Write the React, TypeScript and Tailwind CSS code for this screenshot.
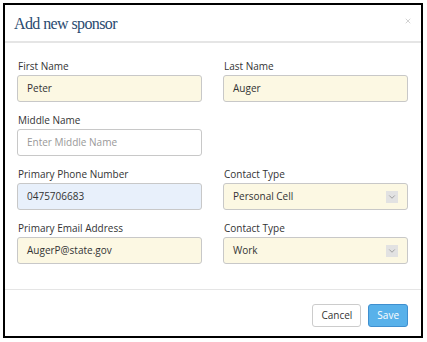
import { ChevronDown, X } from "lucide-react";

type FieldProps = {
  label: string;
  value?: string;
  placeholder?: string;
  tone?: "cream" | "blue" | "white";
  select?: boolean;
};

const tones = {
  cream: "bg-[#fcf8e3]",
  blue: "bg-[#e8f0fb]",
  white: "bg-white",
};

function Field({ label, value, placeholder, tone = "cream", select }: FieldProps) {
  return (
    <div className="flex flex-col">
      <label className="h-[15px] text-[10px] leading-[15px] text-[#333] pl-[1px]">{label}</label>
      <div
        className={`mt-[1px] h-[27px] rounded-[3px] border border-[#c8c8c8] flex items-center pl-[9px] pr-[9px] text-[10px] ${tones[tone]}`}
      >
        {value ? (
          <span className="text-[#333]">{value}</span>
        ) : (
          <span className="text-[#999]">{placeholder}</span>
        )}
        {select && (
          <span className="ml-auto w-[12px] h-[12px] bg-[#e2e2e2] flex items-center justify-center">
            <ChevronDown size={10} strokeWidth={1.5} color="#777" />
          </span>
        )}
      </div>
    </div>
  );
}

export default function App() {
  return (
    <main className="w-[427px] h-[342px] bg-white p-[3px] font-['Open_Sans',sans-serif]">
      <div className="w-[420px] h-[335px] border-2 border-black flex flex-col">
        {/* header */}
        <div className="h-[38px] flex items-center pl-[9px] pr-[9px] border-b-2 border-[#e5e5e5]">
          <h2 className="text-[16px] tracking-[-0.6px] text-[#2a4a70] font-['Liberation_Serif'] pt-[2px]">
            Add new sponsor
          </h2>
          <X size={8} strokeWidth={2} color="#bbb" className="ml-auto -mt-[5px]" />
        </div>

        {/* body */}
        <div className="flex-1 grid grid-cols-[185px_185px] gap-x-[21px] gap-y-[11px] pl-[12px] pt-[16px] content-start">
          <Field label="First Name" value="Peter" />
          <Field label="Last Name" value="Auger" />
          <Field label="Middle Name" placeholder="Enter Middle Name" tone="white" />
          <div />
          <Field label="Primary Phone Number" value="0475706683" tone="blue" />
          <Field label="Contact Type" value="Personal Cell" select />
          <Field label="Primary Email Address" value="AugerP@state.gov" />
          <Field label="Contact Type" value="Work" select />
        </div>

        {/* footer */}
        <div className="h-[47px] border-t border-[#e5e5e5] flex items-start justify-end gap-[7px] pr-[13px] pt-[14px]">
          <button className="h-[23px] px-[8px] rounded-[3px] border border-[#ccc] bg-white text-[10px] text-[#333]">
            Cancel
          </button>
          <button className="h-[23px] px-[8px] rounded-[3px] border border-[#3f8fcf] bg-[#58b1ea] text-[10px] text-white">
            Save
          </button>
        </div>
      </div>
    </main>
  );
}
